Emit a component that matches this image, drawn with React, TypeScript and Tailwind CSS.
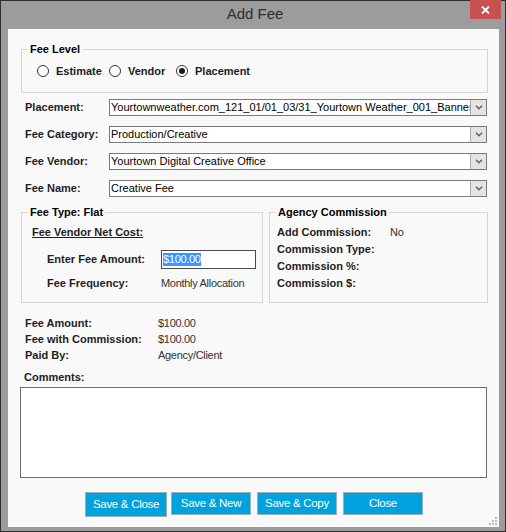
const FONT = "font-['Liberation_Sans',Arial,sans-serif]";
const LABEL = 'text-[11px] font-bold text-[#1e1e1e]';
const VALUE = 'text-[11px] tracking-[-0.3px] text-[#333]';

function Chevron() {
    return (
        <svg width="8" height="5" viewBox="0 0 8 5">
            <path d="M1 0.8 L4 3.8 L7 0.8" stroke="#5f5f5f" strokeWidth="1.5" fill="none" />
        </svg>
    );
}

function Combo({ value }: { value: string }) {
    return (
        <div className="flex h-[17px] w-[378px] border border-[#7a7a7a] bg-white">
            <div className="flex-1 overflow-hidden whitespace-nowrap pl-[1px] text-[11px] leading-[15px] text-black">
                {value}
            </div>
            <div className="flex w-[16px] shrink-0 items-center justify-center border-l border-[#acacac] bg-[#e3e3e3]">
                <Chevron />
            </div>
        </div>
    );
}

function Radio({ label, checked, width }: { label: string; checked?: boolean; width: string }) {
    return (
        <div className={`flex items-center gap-[7px] ${width}`}>
            <div className="flex h-[12px] w-[12px] items-center justify-center rounded-full border border-[#333] bg-white">
                {checked && <div className="h-[6px] w-[6px] rounded-full bg-[#1a1a1a]" />}
            </div>
            <span className={LABEL}>{label}</span>
        </div>
    );
}

function Legend({ children }: { children: React.ReactNode }) {
    return <legend className={`ml-[6px] px-[2px] leading-[14px] ${LABEL} text-black`}>{children}</legend>;
}

const COMBOS = [
    { label: 'Placement:', value: 'Yourtownweather.com_121_01/01_03/31_Yourtown Weather_001_Banner' },
    { label: 'Fee Category:', value: 'Production/Creative' },
    { label: 'Fee Vendor:', value: 'Yourtown Digital Creative Office' },
    { label: 'Fee Name:', value: 'Creative Fee' },
];

const COMMISSION = [
    { label: 'Add Commission:', value: 'No' },
    { label: 'Commission Type:', value: '' },
    { label: 'Commission %:', value: '' },
    { label: 'Commission $:', value: '' },
];

const TOTALS = [
    { label: 'Fee Amount:', value: '$100.00' },
    { label: 'Fee with Commission:', value: '$100.00' },
    { label: 'Paid By:', value: 'Agency/Client' },
];

const BUTTONS = [
    { text: 'Save & Close', w: 'w-[82px]', ml: 'ml-0' },
    { text: 'Save & New', w: 'w-[80px]', ml: 'ml-[4px]' },
    { text: 'Save & Copy', w: 'w-[80px]', ml: 'ml-[6px]' },
    { text: 'Close', w: 'w-[80px]', ml: 'ml-[6px]' },
];

export default function App() {
    return (
        <div className={`flex h-[532px] w-[506px] flex-col border border-[#2e2e2e] bg-[#9c9c9c] ${FONT}`}>
            {/* title bar */}
            <div className="flex h-[28px] shrink-0 items-start">
                <div className="w-[39px]" />
                <div className="flex-1 pt-[4px] text-center text-[15px] leading-[18px] text-[#2f2f2f]">Add Fee</div>
                <div className="-mt-[1px] mr-[4px] flex h-[19px] w-[31px] items-center justify-center bg-[#c75050]">
                    <svg width="9" height="8" viewBox="0 0 9 8">
                        <path d="M1 0.5 L8 7.5 M8 0.5 L1 7.5" stroke="white" strokeWidth="1.8" />
                    </svg>
                </div>
            </div>

            {/* client area */}
            <div className="mb-[4px] ml-[7px] mr-[6px] flex flex-1 flex-col bg-[#f9f9f9]">
                <fieldset className="ml-[13px] mr-[11px] mt-[13px] border border-[#d6d6d6] pb-[13px]">
                    <Legend>Fee Level</Legend>
                    <div className="mt-[7px] flex h-[16px] items-center pl-[15px]">
                        <Radio label="Estimate" width="w-[72px]" />
                        <Radio label="Vendor" width="w-[67px]" />
                        <Radio label="Placement" checked width="" />
                    </div>
                </fieldset>

                <div className="ml-[17px] mt-[6px] flex flex-col gap-[10px]">
                    {COMBOS.map((row) => (
                        <div key={row.label} className="flex items-center">
                            <span className={`w-[84px] ${LABEL}`}>{row.label}</span>
                            <Combo value={row.value} />
                        </div>
                    ))}
                </div>

                <div className="ml-[13px] mr-[11px] mt-[8px] flex gap-[6px]">
                    <fieldset className="w-[242px] border border-[#d6d6d6] pb-[12px]">
                        <Legend>Fee Type: Flat</Legend>
                        <div className="pl-[10px] pt-[5px] leading-[14px]">
                            <span className={`underline ${LABEL}`}>Fee Vendor Net Cost:</span>
                        </div>
                        <div className="mt-[11px] flex items-center pl-[25px]">
                            <span className={`w-[114px] ${LABEL}`}>Enter Fee Amount:</span>
                            <div className="flex h-[19px] w-[95px] items-center border border-[#4a4a4a] bg-white pl-[1px]">
                                <span className="bg-[#3399ff] text-[11px] leading-[13px] tracking-[-0.3px] text-white">$100.00</span>
                            </div>
                        </div>
                        <div className="mt-[7px] flex items-center pl-[25px] leading-[14px]">
                            <span className={`w-[114px] ${LABEL}`}>Fee Frequency:</span>
                            <span className={VALUE}>Monthly Allocation</span>
                        </div>
                    </fieldset>

                    <fieldset className="flex-1 border border-[#d6d6d6]">
                        <Legend>Agency Commission</Legend>
                        <div className="flex flex-col pl-[7px] pt-[5px]">
                            {COMMISSION.map((row) => (
                                <div key={row.label} className="flex h-[17px] items-center">
                                    <span className={`w-[113px] ${LABEL}`}>{row.label}</span>
                                    <span className={VALUE}>{row.value}</span>
                                </div>
                            ))}
                        </div>
                    </fieldset>
                </div>

                <div className="ml-[17px] mt-[12px] flex flex-col">
                    {TOTALS.map((row) => (
                        <div key={row.label} className="flex h-[16px] items-center">
                            <span className={`w-[133px] ${LABEL}`}>{row.label}</span>
                            <span className={VALUE}>{row.value}</span>
                        </div>
                    ))}
                </div>

                <div className={`ml-[16px] mt-[7px] leading-[14px] ${LABEL}`}>Comments:</div>
                <div className="ml-[12px] mr-[12px] mt-[3px] h-[91px] border border-[#6d6d6d] bg-white" />

                <div className="mt-[14px] flex items-start pl-[77px]">
                    {BUTTONS.map((b, i) => (
                        <div
                            key={b.text}
                            className={`flex ${i === 0 ? 'h-[25px]' : 'h-[23px]'} ${b.w} ${b.ml} items-center justify-center border border-[#9db0bf] bg-[#00a2de] text-[11.5px] tracking-[-0.3px] text-white`}
                        >
                            {b.text}
                        </div>
                    ))}
                </div>

                <div className="flex flex-1 items-end justify-end pb-[2px] pr-[2px]">
                    <svg width="8" height="8" viewBox="0 0 8 8">
                        <g fill="#bdbdbd">
                            <rect x="6" y="0" width="2" height="2" />
                            <rect x="3" y="3" width="2" height="2" />
                            <rect x="6" y="3" width="2" height="2" />
                            <rect x="0" y="6" width="2" height="2" />
                            <rect x="3" y="6" width="2" height="2" />
                            <rect x="6" y="6" width="2" height="2" />
                        </g>
                    </svg>
                </div>
            </div>
        </div>
    );
}
